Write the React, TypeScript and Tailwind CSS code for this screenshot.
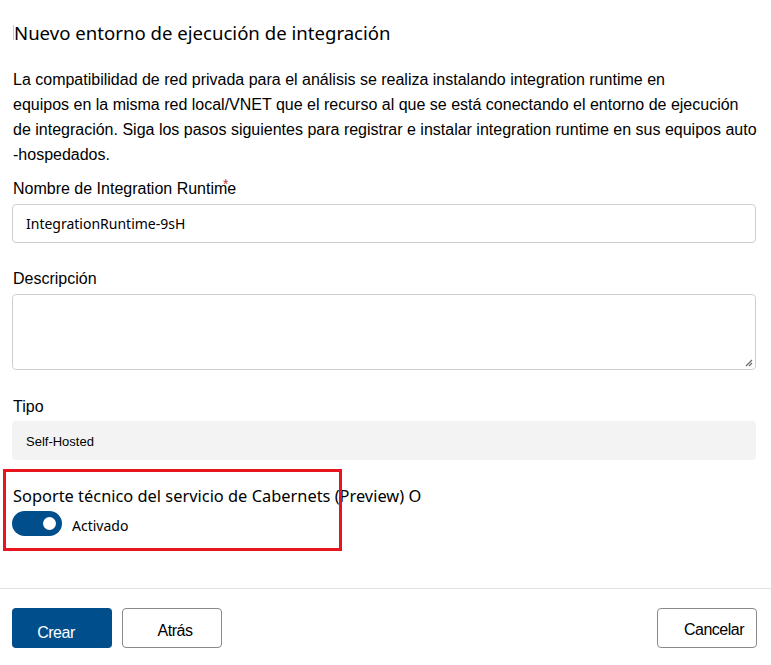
import React from "react";

const segoe = { fontFamily: '"Noto Sans", "Open Sans", sans-serif' };

function Label({ children }: { children: React.ReactNode }) {
  return (
    <div className="font-['Liberation_Sans',Arial,sans-serif] text-[16px] leading-[22px] text-black pl-[1px]">
      {children}
    </div>
  );
}

export default function App() {
  return (
    <div className="relative w-[771px] h-[665px] bg-white overflow-hidden font-['Liberation_Sans',Arial,sans-serif] text-black">
      <div className="px-3">
        {/* Dialog heading */}
        <div className="relative pt-[20px] pl-[2px]">
          <span className="absolute left-[1px] top-[25px] h-[15px] w-px bg-[#c8c8c8]" />
          <h1 className="text-[18.6px] leading-[26px] font-normal" style={segoe}>
            Nuevo entorno de ejecución de integración
          </h1>
        </div>

        {/* Intro text */}
        <p className="mt-[21px] text-[16px] leading-[25px] pl-[1px]">
          La compatibilidad de red privada para el análisis se realiza instalando integration runtime en
          <br />
          equipos en la misma red local/VNET que el recurso al que se está conectando el entorno de ejecución
          <br />
          de integración. Siga los pasos siguientes para registrar e instalar integration runtime en sus equipos auto
          <br />
          -hospedados.
        </p>

        {/* Name */}
        <div className="mt-[11px] relative">
          <div className="text-[16px] leading-[22px] pl-[1px]">
            Nombre de Integration Runtime
            <span className="absolute left-[211px] top-[-5px] text-[#d13438] text-[14px]">*</span>
          </div>
          <div className="mt-[4px] h-[39px] w-[744px] rounded-[4px] border border-[#cfcfcf] flex items-center pl-[13px]">
            <span className="text-[14px]" style={segoe}>
              IntegrationRuntime-9sH
            </span>
          </div>
        </div>

        {/* Description */}
        <div className="mt-[25px]">
          <Label>Descripción</Label>
          <div className="relative mt-[4px] h-[76px] w-[744px] rounded-[4px] border border-[#cfcfcf]">
            <svg className="absolute right-[2px] bottom-[2px]" width="8" height="8" viewBox="0 0 8 8">
              <path d="M7 1 L1 7 M7 4 L4 7" stroke="#6b6b6b" strokeWidth="1.2" />
            </svg>
          </div>
        </div>

        {/* Type */}
        <div className="mt-[26px]">
          <Label>Tipo</Label>
          <div className="mt-[3px] h-[39px] w-[744px] rounded-[4px] bg-[#f3f3f3] flex items-center pl-[14px] pt-[3px]">
            <span className="text-[13px]">Self-Hosted</span>
          </div>
        </div>

        {/* Service support toggle */}
        <div className="mt-[25px]">
          <div className="text-[16.4px] leading-[22px] pl-[1px]" style={segoe}>
            Soporte técnico del servicio de Cabernets (Preview) O
          </div>
          <div className="mt-[3px] flex items-center gap-[10px]">
            <div className="w-[50px] h-[25px] rounded-full bg-[#004e8c] flex items-center justify-end pr-[6px]">
              <div className="w-[13px] h-[13px] rounded-full bg-white" />
            </div>
            <span className="text-[14px] pt-[5px]" style={segoe}>
              Activado
            </span>
          </div>
        </div>
      </div>

      {/* Highlight frame around the toggle section */}
      <div className="absolute left-[3px] top-[469px] w-[339px] h-[82px] border-[3px] border-[#e8141e]" />

      {/* Footer */}
      <div className="absolute left-0 right-0 top-[588px] h-px bg-[#e1e1e1]" />
      <div className="absolute left-[12px] right-[14px] top-[608px] flex items-center">
        <button className="w-[100px] h-[40px] rounded-[4px] bg-[#004e8c] text-white text-[16px] tracking-[-0.5px] pt-[9px] pr-[12px]">
          Crear
        </button>
        <button className="ml-[10px] w-[100px] h-[40px] rounded-[4px] border border-[#8a8a8a] bg-white text-[16px] tracking-[-0.5px] pt-[6px] pl-[6px]">
          Atrás
        </button>
        <div className="flex-1" />
        <button className="w-[100px] h-[40px] rounded-[4px] border border-[#8a8a8a] bg-white text-[16px] tracking-[-0.5px] pt-[3px] pl-[14px]">
          Cancelar
        </button>
      </div>
    </div>
  );
}
